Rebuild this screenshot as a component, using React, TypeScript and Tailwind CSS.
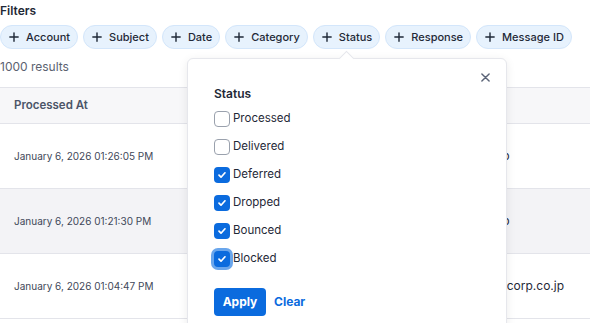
import { useState } from "react";

const FILTERS = ["Account", "Subject", "Date", "Category", "Status", "Response", "Message ID"];

const STATUSES = [
  { label: "Processed", checked: false },
  { label: "Delivered", checked: false },
  { label: "Deferred", checked: true },
  { label: "Dropped", checked: true },
  { label: "Bounced", checked: true },
  { label: "Blocked", checked: true, focused: true },
];

const ROWS = [
  { at: "January 6, 2026 01:26:05 PM", to: "alert@mail.acme.co.jp" },
  { at: "January 6, 2026 01:21:30 PM", to: "alert@mail.acme.co.jp" },
  { at: "January 6, 2026 01:04:47 PM", to: "billing@mail.contoso-corp.co.jp" },
];

function PlusIcon() {
  return (
    <svg width="10" height="10" viewBox="0 0 12 12" className="shrink-0">
      <path d="M6 1v10M1 6h10" stroke="#1f2937" strokeWidth="1.7" strokeLinecap="round" />
    </svg>
  );
}

function Check({ checked, focused }: { checked: boolean; focused?: boolean }) {
  return (
    <span
      className={`flex h-4 w-4 shrink-0 items-center justify-center rounded-[4px] ${
        checked ? "bg-[#0b6bde]" : "border border-[#9aa1ad] bg-white"
      } ${focused ? "ring-[3px] ring-[#6aa6ec]" : ""}`}
    >
      {checked && (
        <svg width="10" height="10" viewBox="0 0 10 10">
          <path d="M2 5.2l2 2 4-4.4" fill="none" stroke="white" strokeWidth="1.7" strokeLinecap="round" strokeLinejoin="round" />
        </svg>
      )}
    </span>
  );
}

export default function App() {
  const [statuses, setStatuses] = useState(STATUSES);

  return (
    <div className="relative h-[323px] w-[590px] overflow-hidden bg-white font-['Inter',sans-serif] text-[#1f2937]">
      <div className="pt-[3px] text-[12px] font-semibold leading-4">Filters</div>

      <div className="mt-[6px] flex gap-[5px]">
        {FILTERS.map((f) => (
          <button
            key={f}
            className="flex h-[24px] shrink-0 items-center gap-[7px] whitespace-nowrap rounded-full border border-[#d3e6fb] bg-[#e7f2fd] pl-[8px] pr-[7px] text-[11px] font-medium text-[#1f2937]"
          >
            <PlusIcon />
            {f}
          </button>
        ))}
      </div>

      <div className="mt-[10px] text-[12px] leading-4 text-[#5b6270]">1000 results</div>

      {/* Table */}
      <div className="mt-[12px] border-t border-[#e3e4ea]">
        <div className="flex h-[36px] items-center border-b border-[#e3e4ea] bg-[#f7f7f9] text-[11.5px] font-semibold text-[#4b5568]">
          <div className="w-[300px] pl-[14px]">Processed At</div>
          <div>To</div>
        </div>
        {ROWS.map((r, i) => (
          <div
            key={i}
            className={`flex h-[65px] items-center border-b border-[#e3e4ea] text-[10px] text-[#3f4859] ${
              i === 1 ? "bg-[#f3f3f6]" : "bg-white"
            }`}
          >
            <div className="w-[300px] pl-[14px]">{r.at}</div>
            <div className="pl-[84px] text-[12px] text-[#1f2937]">{r.to}</div>
          </div>
        ))}
      </div>

      {/* Status popover */}
      <div className="absolute left-[187px] top-[58px] h-[290px] w-[320px] rounded-[6px] border border-[#e6e7ec] bg-white shadow-[0_2px_10px_rgba(0,0,0,0.08)]">
        <div className="absolute -top-[6px] left-[153px] h-[11px] w-[11px] rotate-45 border-l border-t border-[#e6e7ec] bg-white" />
        <button className="absolute right-[16px] top-[14px] text-[#5b6477]">
          <svg width="9" height="9" viewBox="0 0 10 10">
            <path d="M1 1l8 8M9 1l-8 8" stroke="currentColor" strokeWidth="1.6" strokeLinecap="round" />
          </svg>
        </button>
        <div className="pl-[26px] pt-[27px]">
          <div className="text-[12px] font-semibold leading-4 text-[#1f2937]">Status</div>
          <div className="mt-[9px] flex flex-col gap-[12px]">
            {statuses.map((s, i) => (
              <label
                key={s.label}
                className="flex h-4 cursor-pointer items-center gap-[3px] text-[11.5px] text-[#1f2937]"
                onClick={() =>
                  setStatuses((prev) => prev.map((p, j) => (j === i ? { ...p, checked: !p.checked } : p)))
                }
              >
                <Check checked={s.checked} focused={s.focused} />
                <span>{s.label}</span>
              </label>
            ))}
          </div>
          <div className="mt-[21px] flex items-center gap-[8px]">
            <button className="h-[28px] w-[52px] rounded-[4px] bg-[#0b6bde] text-[12px] font-bold text-white">
              Apply
            </button>
            <button className="text-[12px] font-bold text-[#0b6bde]">Clear</button>
          </div>
        </div>
      </div>
    </div>
  );
}
